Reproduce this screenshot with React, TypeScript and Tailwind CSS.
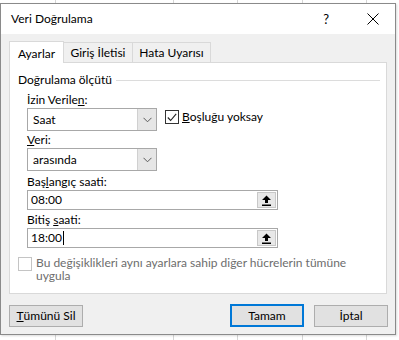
import React from "react"

function Chevron() {
  return (
    <svg width="9" height="6" viewBox="0 0 9 6" fill="none">
      <path d="M0.5 0.8 L4.5 4.8 L8.5 0.8" stroke="#5a5a5a" strokeWidth="1" />
    </svg>
  )
}

function CollapseIcon() {
  return (
    <svg width="11" height="11" viewBox="0 0 11 11">
      <path d="M5.5 0.5 L10 5 H7 V8 H4 V5 H1 Z" fill="#000" />
      <rect x="1" y="9.5" width="9" height="1.5" fill="#000" />
    </svg>
  )
}

function Select({ value }: { value: string }) {
  return (
    <div className="flex h-[23px] w-[130px] border border-[#a8a8a8] bg-white">
      <div className="flex flex-1 items-center pl-[5px]">{value}</div>
      <div className="flex w-[19px] items-center justify-center border-l border-[#d0d0d0] bg-[#e6e6e6]">
        <Chevron />
      </div>
    </div>
  )
}

function TimeInput({ value, caret }: { value: string; caret?: boolean }) {
  return (
    <div className="flex h-[20px] w-[251px] border border-[#a8a8a8] bg-white">
      <div className="flex flex-1 items-center pl-[3px]">
        {value}
        {caret && <span className="ml-px inline-block h-[14px] w-px bg-black" />}
      </div>
      <div className="m-px flex w-[19px] items-center justify-center border border-[#c8c8c8] bg-[#e8e8e8]">
        <CollapseIcon />
      </div>
    </div>
  )
}

export default function App() {
  return (
    <div className="h-[340px] w-[399px] overflow-hidden bg-white bg-[linear-gradient(to_right,transparent_55px,#d6d6d6_55px,#d6d6d6_56px,transparent_56px,transparent_173px,#d6d6d6_173px,#d6d6d6_174px,transparent_174px,transparent_237px,#d6d6d6_237px,#d6d6d6_238px,transparent_238px,transparent_302px,#d6d6d6_302px,#d6d6d6_303px,transparent_303px,transparent_366px,#d6d6d6_366px,#d6d6d6_367px,transparent_367px)] pt-[3px] font-['Lato',sans-serif] text-[12px] leading-[16px] text-black">
      <div className="flex h-[332px] w-[396px] flex-col border border-[#8a8a8a] bg-[#f0f0f0] shadow-[1px_1px_2px_rgba(0,0,0,0.15)]">
        {/* title bar */}
        <div className="flex h-[30px] items-center bg-white">
          <span className="ml-[10px] flex-1 text-[12px]">Veri Doğrulama</span>
          <span className="mr-[38px] text-[13px]">?</span>
          <svg className="mr-[16px]" width="12" height="12" viewBox="0 0 12 12">
            <path d="M0.5 0.5 L11.5 11.5 M11.5 0.5 L0.5 11.5" stroke="#000" strokeWidth="1" />
          </svg>
        </div>

        {/* tabs */}
        <div className="mt-[7px] flex items-end pl-[8px]">
          <div className="relative z-10 -mb-px flex h-[22px] w-[55px] items-center justify-center border border-b-0 border-[#d9d9d9] bg-white pt-[2px]">
            Ayarlar
          </div>
          <div className="-ml-px flex h-[20px] w-[70px] items-center justify-center border border-b-0 border-[#d9d9d9]">
            Giriş İletisi
          </div>
          <div className="-ml-px flex h-[20px] w-[79px] items-center justify-center border border-b-0 border-[#d9d9d9]">
            Hata Uyarısı
          </div>
        </div>

        {/* tab panel */}
        <div className="ml-[8px] h-[232px] w-[378px] border border-[#d9d9d9] bg-white">
          <div className="mt-[9px] flex items-center pl-[8px] pr-[6px]">
            <span>Doğrulama ölçütü</span>
            <div className="ml-[4px] h-px flex-1 bg-[#dcdcdc]" />
          </div>

          <div className="pl-[17px]">
            <div className="mt-[4px]">
              İzin Verile<u>n</u>:
            </div>
            <div className="flex items-start">
              <Select value="Saat" />
              <div className="ml-[8px] mt-px flex items-center">
                <div className="flex h-[14px] w-[14px] items-center justify-center border border-[#333] bg-white">
                  <svg width="10" height="9" viewBox="0 0 10 9">
                    <path d="M0.8 4.5 L3.6 7.5 L9.2 0.8" stroke="#222" strokeWidth="1.1" fill="none" />
                  </svg>
                </div>
                <span className="ml-[3px]">
                  <u>B</u>oşluğu yoksay
                </span>
              </div>
            </div>

            <div className="mt-px">
              <u>V</u>eri:
            </div>
            <Select value="arasında" />

            <div className="mt-[3px]">
              Baş<u>l</u>angıç saati:
            </div>
            <TimeInput value="08:00" />

            <div className="mt-[2px]">
              Bitiş <u>s</u>aati:
            </div>
            <TimeInput value="18:00" caret />
          </div>

          <div className="mt-[8px] flex items-start pl-[8px] text-[#6d6d6d]">
            <div className="mt-px h-[14px] w-[14px] shrink-0 border border-[#c4c4c4] bg-white" />
            <div className="ml-[4px] w-[330px] leading-[13px]">
              Bu değişiklikleri aynı ayarlara sahip diğer hücrelerin tümüne uygula
            </div>
          </div>
        </div>

        {/* buttons */}
        <div className="mt-[10px] flex items-center pl-[8px]">
          <button className="flex h-[22px] w-[74px] items-center justify-center border border-[#adadad] bg-[#e1e1e1]">
            <u>T</u>ümünü Sil
          </button>
          <div className="flex-1" />
          <button className="flex h-[23px] w-[74px] items-center justify-center border-2 border-[#0078d7] bg-[#e1e1e1]">
            Tamam
          </button>
          <button className="ml-[10px] mr-[7px] flex h-[22px] w-[74px] items-center justify-center border border-[#adadad] bg-[#e1e1e1]">
            İptal
          </button>
        </div>
      </div>
    </div>
  )
}
